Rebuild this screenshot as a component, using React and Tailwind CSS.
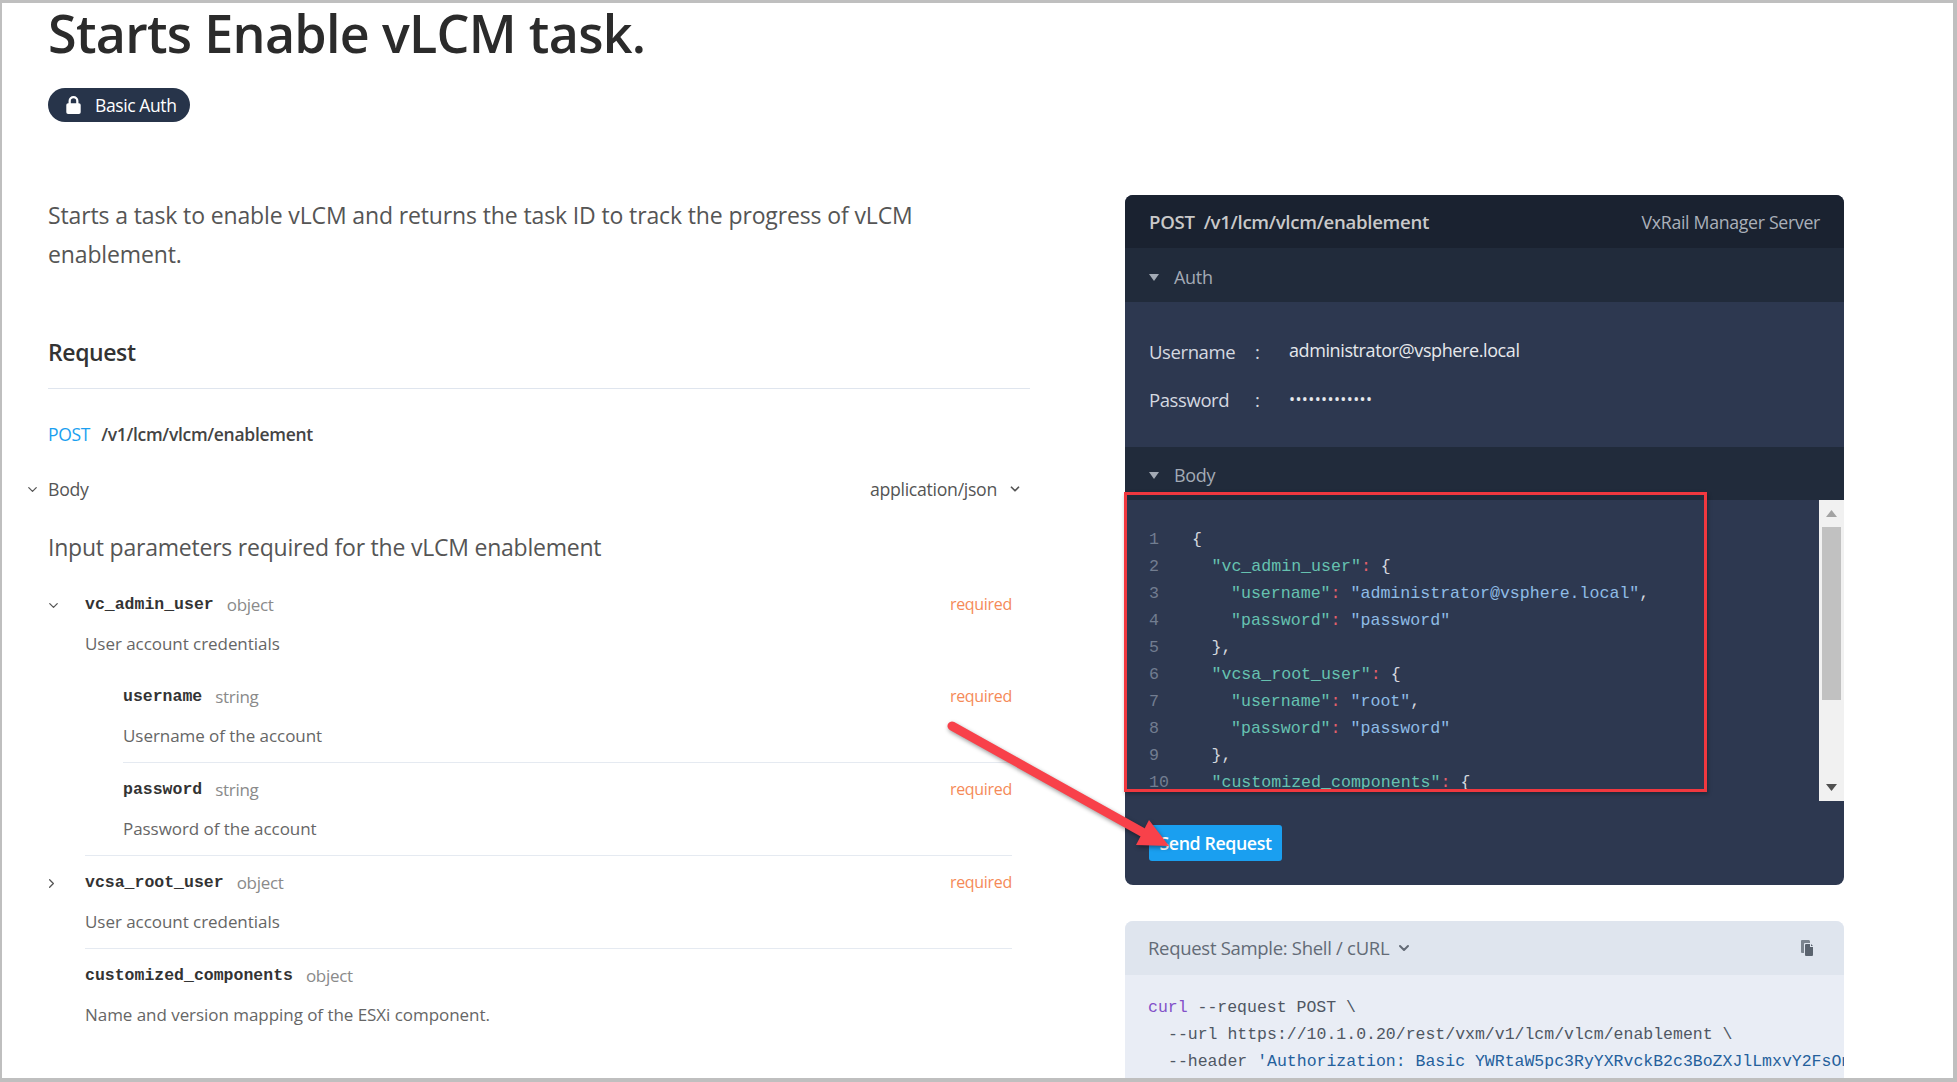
import React from "react";
import { ChevronDown, ChevronRight } from "lucide-react";

const sans = "font-['Open_Sans','Noto_Sans',sans-serif]";
const mono = "font-['Liberation_Mono',monospace]";

const Field = ({ name, type, desc, required, chevron, divider, indent }) => (
  <div className={`${indent ? "ml-[75px]" : "ml-[37px]"} ${divider ? "border-b border-[#e5eaf1]" : ""} pb-[14px] pt-[13px]`}>
    <div className="relative flex h-[28px] items-center">
      {chevron === "down" && <ChevronDown className="absolute left-[-39px] text-[#555]" size={15} />}
      {chevron === "right" && <ChevronRight className="absolute left-[-41px] text-[#555]" size={15} />}
      <span className={`${mono} mt-[1px] text-[16.5px] font-bold text-[#333]`}>{name}</span>
      <span className="ml-[13px] text-[17px] tracking-[-0.3px] text-[#8a8a8a]">{type}</span>
      {required && <span className="-mt-[2px] ml-auto text-[16px] tracking-[-0.3px] text-[#f58a58]">required</span>}
    </div>
    <div className="mt-[13px] h-[24px] text-[17px] leading-[24px] tracking-[-0.05px] text-[#666]">{desc}</div>
  </div>
);

const CodeLine = ({ n, indent, children }) => (
  <div className="flex h-[27px] items-center">
    <span className="w-[43px] shrink-0 text-[#727d90]">{n}</span>
    <span className="whitespace-pre" style={{ paddingLeft: indent * 9.75 }}>{children}</span>
  </div>
);

const K = ({ children }) => <span className="text-[#66c2b0]">{children}</span>;
const S = ({ children }) => <span className="text-[#8fbce6]">{children}</span>;
const C = () => <span className="text-[#e2606b]">:</span>;

const Caret = () => (
  <svg width="10" height="7" viewBox="0 0 10 7" fill="#a3aab5" className="mr-[15px]">
    <path d="M0 0h10L5 7z" />
  </svg>
);

const Console = () => (
  <div className="overflow-hidden rounded-[8px] bg-[#2d3850] text-[#c7cdd8]">
    <div className="flex h-[53px] items-center justify-between bg-[#1a2230] px-[24px] pt-[1px]">
      <span className="text-[18.6px] font-semibold tracking-[-0.3px] text-[#c9c9c9]">POST&nbsp;&nbsp;/v1/lcm/vlcm/enablement</span>
      <span className="text-[17.7px] tracking-[-0.3px] text-[#aab0ba]">VxRail Manager Server</span>
    </div>
    <div className="flex h-[54px] items-center bg-[#212b3b] px-[24px] pt-[4px] text-[18px] tracking-[-0.3px] text-[#a3aab5]">
      <Caret />Auth
    </div>
    <div className="flex h-[145px] flex-col justify-center gap-[21px] px-[24px] pt-[2px] tracking-[-0.4px]">
      <div className="flex h-[27px] items-center">
        <span className="w-[106px] text-[18.5px] text-[#d5d9e0]">Username</span>
        <span className="w-[34px] text-[18.5px] text-[#d5d9e0]">:</span>
        <span className="-mt-[2px] text-[18px] text-[#e6e8ec]">administrator@vsphere.local</span>
      </div>
      <div className="flex h-[27px] items-center">
        <span className="w-[106px] text-[18.5px] text-[#d5d9e0]">Password</span>
        <span className="w-[34px] text-[18.5px] text-[#d5d9e0]">:</span>
        <span className="-mt-[1px] text-[16px] tracking-[0.4px] text-[#e6e8ec]">•••••••••••••</span>
      </div>
    </div>
    <div className="flex h-[53px] items-center bg-[#212b3b] px-[24px] pt-[3px] text-[18px] tracking-[-0.3px] text-[#a3aab5]">
      <Caret />Body
    </div>
    <div className="flex h-[301px]">
      <div className={`${mono} min-w-0 flex-1 overflow-hidden pl-[24px] pt-[27px] text-[16.6px] text-[#d3d7de]`}>
        <CodeLine n="1" indent={0}>{"{"}</CodeLine>
        <CodeLine n="2" indent={2}><K>"vc_admin_user"</K><C /> {"{"}</CodeLine>
        <CodeLine n="3" indent={4}><K>"username"</K><C /> <S>"administrator@vsphere.local"</S>,</CodeLine>
        <CodeLine n="4" indent={4}><K>"password"</K><C /> <S>"password"</S></CodeLine>
        <CodeLine n="5" indent={2}>{"},"}</CodeLine>
        <CodeLine n="6" indent={2}><K>"vcsa_root_user"</K><C /> {"{"}</CodeLine>
        <CodeLine n="7" indent={4}><K>"username"</K><C /> <S>"root"</S>,</CodeLine>
        <CodeLine n="8" indent={4}><K>"password"</K><C /> <S>"password"</S></CodeLine>
        <CodeLine n="9" indent={2}>{"},"}</CodeLine>
        <CodeLine n="10" indent={2}><K>"customized_components"</K><C /> {"{"}</CodeLine>
      </div>
      <div className="flex w-[25px] shrink-0 flex-col items-center bg-[#f1f1f1]">
        <div className="flex h-[27px] items-center">
          <svg width="11" height="7" viewBox="0 0 11 7" fill="#a3a3a3"><path d="M5.500 0L11 7H0z" /></svg>
        </div>
        <div className="h-[173px] w-[19px] bg-[#c1c1c1]" />
        <div className="flex-1" />
        <div className="flex h-[27px] items-center">
          <svg width="11" height="7" viewBox="0 0 11 7" fill="#505050"><path d="M0 0h11L5.500 7z" /></svg>
        </div>
      </div>
    </div>
    <div className="h-[84px] px-[24px] pt-[24px]">
      <button className="flex h-[36px] w-[133px] items-center justify-center rounded-[3px] bg-[#1a9ff0] text-[17.8px] font-semibold tracking-[-0.4px] text-white">
        Send Request
      </button>
    </div>
  </div>
);

const Sample = () => (
  <div className="mt-[36px] flex-1 overflow-hidden rounded-t-[8px] bg-[#e9edf5]">
    <div className="flex h-[54px] items-center justify-between bg-[#dfe5ee] pl-[23px] pr-[30px] text-[#636b76]">
      <span className="flex items-center gap-[7px] text-[18.500px] tracking-[-0.3px]">
        Request Sample: Shell / cURL <ChevronDown size={16} strokeWidth={3} />
      </span>
      <svg width="14" height="16" viewBox="0 0 14 16" fill="#5a636e">
        <path d="M4 0h5l1 1v2H5a1 1 0 0 0-1 1v9H2a1 1 0 0 1-1-1V1a1 1 0 0 1 1-1z" opacity="0.75" />
        <path d="M6 4h4v3h3v8a1 1 0 0 1-1 1H6a1 1 0 0 1-1-1V5a1 1 0 0 1 1-1zM11 4l2 2h-2z" />
      </svg>
    </div>
    <div className={`${mono} whitespace-pre pl-[23px] pt-[19px] text-[16.5px] leading-[27px] text-[#4f5763]`}>
      <div><span className="text-[#8250c8]">curl</span> --request POST \</div>
      <div className="pl-[20px]">--url https://10.1.0.20/rest/vxm/v1/lcm/vlcm/enablement \</div>
      <div className="pl-[20px]">--header <span className="text-[#24609c]">'Authorization: Basic YWRtaW5pc3RyYXRvckB2c3BoZXJlLmxvY2FsOnBhc3N3b3Jk'</span></div>
    </div>
  </div>
);

export default function App() {
  return (
    <div className={`${sans} relative h-[1082px] w-[1957px] overflow-hidden border-b-4 border-l-2 border-r-4 border-t-[3px] border-[#bfbfbf] bg-white`}>
      <div className="flex h-full pl-[46px]">
        <div className="w-[982px] shrink-0">
          <h1 className="-mt-[1px] h-[62px] text-[52px] font-semibold leading-[62px] tracking-[-0.7px] text-[#2b2b2b]">Starts Enable vLCM task.</h1>
          <div className="mt-[24px] flex h-[34px] w-[142px] items-center rounded-full bg-[#27344a] pl-[17px] text-[17.5px] tracking-[-0.4px] text-white">
            <svg width="17" height="18" viewBox="0 0 18 20" fill="white" className="mr-[13px]">
              <path d="M9 0a5.500 5.500 0 0 0-5.500 5.500V8H3a2 2 0 0 0-2 2v8a2 2 0 0 0 2 2h12a2 2 0 0 0 2-2v-8a2 2 0 0 0-2-2h-.5V5.500A5.500 5.500 0 0 0 9 0zm-3 8V5.500a3 3 0 0 1 6 0V8z" />
            </svg>
            Basic Auth
          </div>
          <p className="mt-[74px] w-[900px] text-[23px] leading-[39px] tracking-[-0.13px] text-[#555]">
            Starts a task to enable vLCM and returns the task ID to track the progress of vLCM enablement.
          </p>
          <h2 className="mt-[63px] border-b border-[#dfe5ee] pb-[21px] text-[23px] font-semibold leading-[30px] tracking-[-0.4px] text-[#333]">Request</h2>
          <div className="mt-[30px] flex h-[30px] items-center text-[17.5px] tracking-[-0.3px]">
            <span className="mr-[11px] text-[#1a9ff0]">POST</span>
            <span className="font-semibold text-[#444]">/v1/lcm/vlcm/enablement</span>
          </div>
          <div className="relative mt-[25px] flex h-[30px] items-center justify-between pr-[8px] text-[17.7px] tracking-[-0.3px] text-[#555]">
            <ChevronDown size={15} className="absolute left-[-23px]" />
            <span>Body</span>
            <span className="flex items-center gap-[11px]">application/json <ChevronDown size={14} strokeWidth={3} /></span>
          </div>
          <div className="mt-[28px] h-[30px] text-[23px] leading-[30px] tracking-[-0.22px] text-[#555]">Input parameters required for the vLCM enablement</div>
          <div className="mr-[18px] mt-[16px]">
            <Field name="vc_admin_user" type="object" desc="User account credentials" required chevron="down" />
            <Field indent name="username" type="string" desc="Username of the account" required divider />
            <Field indent name="password" type="string" desc="Password of the account" required />
            <div className="ml-[37px] border-t border-[#e5eaf1]" />
            <Field name="vcsa_root_user" type="object" desc="User account credentials" required chevron="right" divider />
            <Field name="customized_components" type="object" desc="Name and version mapping of the ESXi component." />
          </div>
        </div>
        <div className="ml-[95px] flex w-[719px] shrink-0 flex-col pt-[192px]">
          <Console />
          <Sample />
        </div>
      </div>

      {/* red annotations lying over the screenshot */}
      <div className="absolute left-[1122px] top-[489px] h-[300px] w-[583px] border-[3px] border-[#f0383f] shadow-[1px_2px_4px_rgba(0,0,0,0.3)]" />
      <svg className="absolute left-[938px] top-[707px] drop-shadow-[1px_2px_2px_rgba(0,0,0,0.4)]" width="240" height="150" viewBox="0 0 240 150">
        <path d="M12 16 L202 122" stroke="#f8414a" strokeWidth="9" strokeLinecap="round" />
        <path d="M229 136 L196 135 L209 110 Z" fill="#f8414a" />
      </svg>
    </div>
  );
}
